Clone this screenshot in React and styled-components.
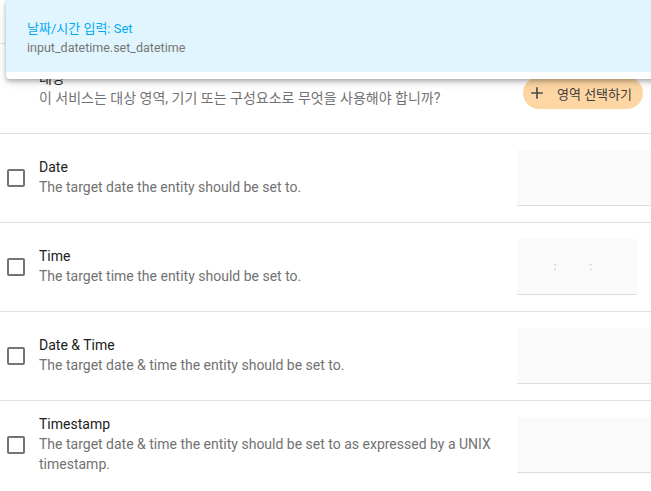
import React from "react";
import styled, { createGlobalStyle } from "styled-components";

const Global = createGlobalStyle`
  html, body {
    margin: 0;
    padding: 0;
    background: #ffffff;
    overflow: hidden;
  }
  body {
    font-family: Roboto, "Noto Sans CJK KR", "Noto Sans", sans-serif;
    -webkit-font-smoothing: antialiased;
  }
`;

const Page = styled.div`
  position: relative;
  width: 651px;
  height: 491px;
  overflow: hidden;
`;

const TopBar = styled.div`
  height: 43px;
  border-bottom: 1px solid #e0e0e0;
`;

const ServiceCard = styled.div`
  position: absolute;
  top: 0;
  left: 6px;
  right: -20px;
  height: 79px;
  background: #ffffff;
  border-radius: 0 0 4px 4px;
  box-shadow: 0 2px 4px rgba(0, 0, 0, 0.25), 0 4px 8px rgba(0, 0, 0, 0.12);
  z-index: 2;
`;

const ServiceItem = styled.div`
  height: 72px;
  background: #e1f5fe;
  padding: 4px 0 0 21px;
  display: flex;
  flex-direction: column;
  justify-content: center;
  box-sizing: border-box;
`;

const ServiceName = styled.div`
  font-size: 13px;
  line-height: 19px;
  color: #03a9f4;
`;

const ServiceId = styled.div`
  font-size: 12.5px;
  line-height: 19px;
  color: #757575;
`;

const TargetRow = styled.div`
  display: flex;
  padding: 24px 8px 25px 39px;
  border-bottom: 1px solid #e0e0e0;
`;

const Row = styled.div`
  display: flex;
  align-items: center;
  height: 88px;
  border-bottom: ${(p) => (p.last ? "none" : "1px solid #e0e0e0")};
`;

const CheckCell = styled.div`
  width: 39px;
  flex: none;
  display: flex;
  padding-left: 7px;
  box-sizing: border-box;
`;

const Checkbox = styled.div`
  width: 18px;
  height: 18px;
  box-sizing: border-box;
  border: 2px solid #737373;
  border-radius: 2px;
`;

const TextBlock = styled.div`
  flex: 1;
  min-width: 0;
  padding-right: 20px;
  padding-bottom: ${(p) => (p.lift ? "2px" : "0")};
`;

const Title = styled.div`
  font-size: 14px;
  line-height: ${(p) => (p.tight ? "19px" : "20px")};
  color: #212121;
`;

const Description = styled.div`
  font-size: 14px;
  line-height: 20px;
  color: #727272;
`;

const AreaButton = styled.button`
  align-self: flex-end;
  flex: none;
  height: 32px;
  margin-bottom: -1px;
  padding: 0 11px 0 4px;
  border: none;
  border-radius: 16px;
  background: #fdd6a3;
  color: #3d3d3d;
  font-family: Roboto, "Noto Sans CJK KR", sans-serif;
  font-size: 13px;
  display: flex;
  align-items: center;
  gap: 10px;
`;

const InputCell = styled.div`
  width: 134px;
  flex: none;
`;

const Field = styled.div`
  width: ${(p) => p.w || "100%"};
  height: 55px;
  box-sizing: content-box;
  background: #fafafa;
  border-bottom: 1px solid #dedede;
  display: flex;
  align-items: center;
  justify-content: center;
  gap: 33px;
  padding-right: ${(p) => (p.w ? "8px" : "0")};
`;

const Colon = styled.span`
  font-size: 11px;
  color: #b0b0b0;
`;

const fields = [
  { title: "Date", desc: "The target date the entity should be set to." },
  { title: "Time", desc: "The target time the entity should be set to.", time: true },
  { title: "Date & Time", desc: "The target date & time the entity should be set to." },
  {
    title: "Timestamp",
    desc: "The target date & time the entity should be set to as expressed by a UNIX timestamp.",
  },
];

const PlusIcon = () => (
  <svg width="20" height="20" viewBox="0 0 24 24">
    <path d="M19 13h-6v6h-2v-6H5v-2h6V5h2v6h6v2z" fill="#4a4a4a" />
  </svg>
);

const App = () => {
  return (
    <Page>
      <Global />
      <ServiceCard>
        <ServiceItem>
          <ServiceName>날짜/시간 입력: Set</ServiceName>
          <ServiceId>input_datetime.set_datetime</ServiceId>
        </ServiceItem>
      </ServiceCard>
      <TopBar />
      <TargetRow>
        <TextBlock>
          <Title>대상</Title>
          <Description>이 서비스는 대상 영역, 기기 또는 구성요소로 무엇을 사용해야 합니까?</Description>
        </TextBlock>
        <AreaButton>
          <PlusIcon />
          영역 선택하기
        </AreaButton>
      </TargetRow>
      {fields.map((f, i) => (
        <Row key={f.title} last={i === fields.length - 1}>
          <CheckCell>
            <Checkbox />
          </CheckCell>
          <TextBlock lift>
            <Title tight>{f.title}</Title>
            <Description>{f.desc}</Description>
          </TextBlock>
          <InputCell>
            {f.time ? (
              <Field w="112px">
                <Colon>:</Colon>
                <Colon>:</Colon>
              </Field>
            ) : (
              <Field />
            )}
          </InputCell>
        </Row>
      ))}
    </Page>
  );
};

export default App;
